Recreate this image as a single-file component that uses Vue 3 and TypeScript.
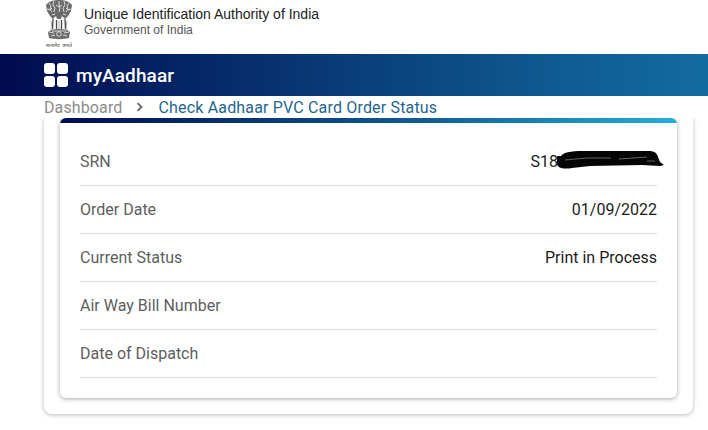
<script setup lang="ts">
const rows: { label: string; value: string; scribble?: boolean }[] = [
  { label: 'SRN', value: 'S18', scribble: true },
  { label: 'Order Date', value: '01/09/2022' },
  { label: 'Current Status', value: 'Print in Process' },
  { label: 'Air Way Bill Number', value: '' },
  { label: 'Date of Dispatch', value: '' },
]
</script>

<template>
  <div class="page">
    <header class="top">
      <div class="emblem">
        <svg width="30" height="42" viewBox="0 0 30 42" aria-hidden="true">
          <g fill="#6b6b6b">
            <path d="M2 5C5 1 10 0 15 0s10 1 13 5l-1 6-3 5-3 3-2-2-1-1-1 3h-4l-1-3-1 1-2 2-3-3-3-5z" />
            <path d="M7 30c5-1.500 11-1.500 16 0l3 2-1 6c-6 1.500-14 1.500-20 0l-1-6z" />
          </g>
          <g fill="none" stroke="#fff" stroke-width=".75">
            <path d="M5 3l2 3-1 3 2 3M10 1l-1 4 2 3-1 4M15 1v4l1 3-1 4M20 1l1 4-2 3 1 4M25 3l-2 3 1 3-2 3" />
            <path d="M3 9l3 1 2-2M12 5l3 2 3-2M22 8l2 2 3-1M8 15l3-1M19 14l3 1" />
            <circle cx="15" cy="34" r="2.300" />
            <path d="M5 32l5 1M20 33l5-1M7 36l4-1M19 35l4 1M8 31h14" />
          </g>
          <g fill="none" stroke="#444" stroke-width="1.300">
            <path d="M9 19l-.5 10M12.500 20v9M17.500 20v9M21 19l.5 10" />
          </g>
          <g fill="none" stroke="#888" stroke-width=".7">
            <path d="M7 21l1 8M23 21l-1 8M15 20v9M6 30h18" />
          </g>
        </svg>
        <span class="motto">सत्यमेव जयते</span>
      </div>
      <div class="org">
        <div class="org-name">Unique Identification Authority of India</div>
        <div class="org-sub">Government of India</div>
      </div>
    </header>

    <nav class="bar">
      <span class="grid-icon"><i></i><i></i><i></i><i></i></span>
      <span class="brand">myAadhaar</span>
    </nav>

    <div class="crumbs">
      <span class="crumb-muted">Dashboard</span>
      <svg class="chev" width="8" height="10" viewBox="0 0 8 10" aria-hidden="true">
        <path d="M1.500 1.200 5.500 5l-4 3.800" fill="none" stroke="#666" stroke-width="1.800" />
      </svg>
      <span class="crumb-current">Check Aadhaar PVC Card Order Status</span>
    </div>

    <section class="outer">
      <div class="inner">
        <div class="stripe"></div>
        <div class="rows">
          <div v-for="row in rows" :key="row.label" class="row">
            <span class="label">{{ row.label }}</span>
            <span class="value" :class="{ masked: row.scribble }">
              {{ row.value }}
              <svg v-if="row.scribble" class="scribble" width="108" height="20" viewBox="0 0 108 20" aria-hidden="true">
                <path d="M4 6C8 1 18 1 30 1l62 0c5 0 8 2 9 6l2 5 4 3-4 1-18-1-52 1-18 2c-5 1-12 1-14-2-2-3-3-7-1-10z" fill="#050505" />
                <path d="M8 10l22-2 24 0M62 9l28-2M90 11l8 0" fill="none" stroke="#8a8a8a" stroke-width=".7" />
              </svg>
            </span>
          </div>
        </div>
      </div>
    </section>
  </div>
</template>

<style scoped>
.page {
  width: 708px;
  height: 430px;
  overflow: hidden;
  background: #fff;
  font-family: Roboto, "Liberation Sans", sans-serif;
}
.top {
  height: 54px;
  display: flex;
  align-items: flex-start;
  gap: 10px;
  padding-left: 44px;
  box-sizing: border-box;
}
.emblem {
  flex: none;
  width: 30px;
  display: flex;
  flex-direction: column;
  align-items: center;
}
.emblem svg { display: block; }
.motto {
  font-size: 5px;
  line-height: 6px;
  color: #333;
  white-space: nowrap;
}
.org {
  padding-top: 5px;
  font-family: "Liberation Sans", Arial, sans-serif;
}
.org-name {
  font-size: 14px;
  line-height: 18px;
  color: #222;
}
.org-sub {
  font-size: 12px;
  line-height: 15px;
  color: #555;
}
.bar {
  height: 42px;
  display: flex;
  align-items: center;
  gap: 8px;
  padding-left: 44px;
  box-sizing: border-box;
  background: linear-gradient(90deg, #000b4f 0%, #0f5a92 78%, #136ba2 100%);
}
.grid-icon {
  display: grid;
  grid-template-columns: 11px 11px;
  grid-template-rows: 11px 11px;
  gap: 2px;
}
.grid-icon i {
  display: block;
  background: #fff;
  border-radius: 3px;
}
.brand {
  color: #fff;
  font-size: 19px;
  font-weight: 500;
  letter-spacing: .1px;
}
.crumbs {
  height: 22px;
  display: flex;
  align-items: center;
  padding-left: 44px;
  font-size: 16px;
}
.crumb-muted { color: #8b8b8b; letter-spacing: .12px; }
.chev { margin: 0 14px; }
.crumb-current { color: #1f6690; letter-spacing: .17px; }
.outer {
  width: 649px;
  height: 296px;
  margin-left: 44px;
  padding: 0 16px;
  box-sizing: border-box;
  border-radius: 0 0 8px 8px;
  background: #fff;
  box-shadow: 0 1px 4px rgba(0, 0, 0, .28);
  clip-path: inset(0 -8px -8px -8px);
}
.inner {
  height: 280px;
  border-radius: 6px;
  background: #fff;
  box-shadow: 0 1px 4px rgba(0, 0, 0, .35);
  overflow: hidden;
}
.stripe {
  height: 5px;
  background: linear-gradient(90deg, #000b4f 0%, #0f5f96 60%, #22aedb 100%);
}
.rows {
  padding: 15px 20px 0;
}
.row {
  height: 48px;
  display: flex;
  align-items: center;
  justify-content: space-between;
  border-bottom: 1px solid #dedede;
  box-sizing: border-box;
  font-size: 16px;
}
.label { color: #5e5e5e; }
.value {
  position: relative;
  color: #1c1c1c;
}
.value.masked { padding-right: 99px; }
.scribble {
  position: absolute;
  left: 26px;
  top: -2px;
}
</style>
